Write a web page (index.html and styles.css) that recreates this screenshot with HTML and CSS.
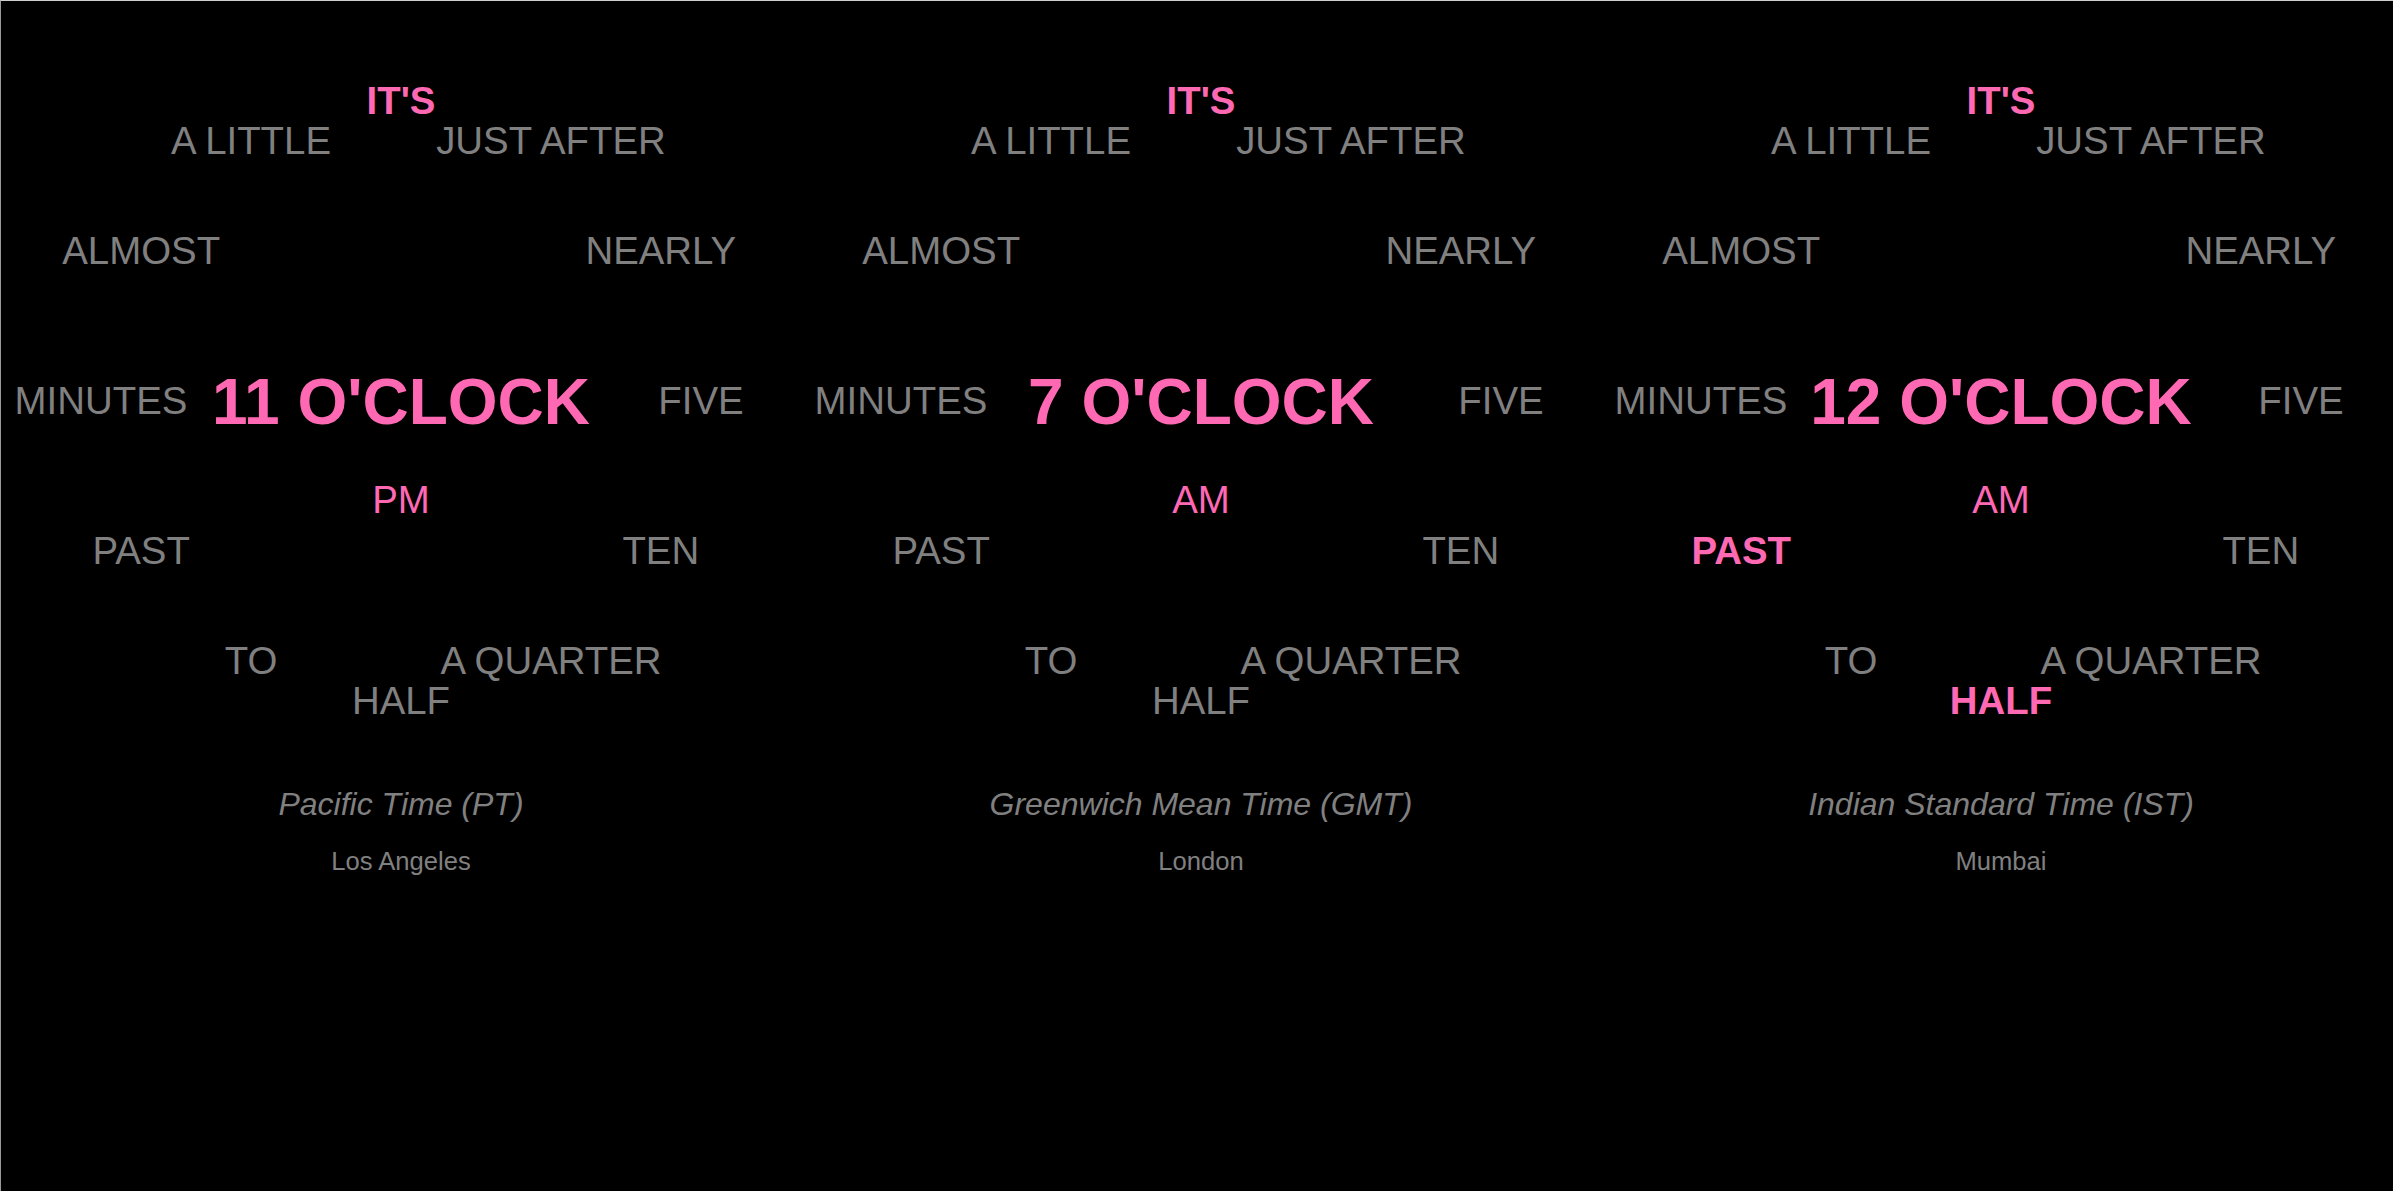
FILE: index.html
```html
<!DOCTYPE html>
<html lang="en">
<head>
<meta charset="utf-8">
<title>World Word Clocks</title>
<link rel="stylesheet" href="styles.css">
</head>
<body>
<main class="clocks">
  <section class="clock">
    <div class="face">
      <span class="word p0 on">IT'S</span>
      <span class="word p30">JUST AFTER</span>
      <span class="word p60">NEARLY</span>
      <span class="word p90">FIVE</span>
      <span class="word p120">TEN</span>
      <span class="word p150">A QUARTER</span>
      <span class="word p180">HALF</span>
      <span class="word p210">TO</span>
      <span class="word p240">PAST</span>
      <span class="word p270">MINUTES</span>
      <span class="word p300">ALMOST</span>
      <span class="word p330">A LITTLE</span>
      <span class="hour">11 O'CLOCK</span>
      <span class="meridiem">PM</span>
    </div>
    <p class="zone">Pacific Time (PT)</p>
    <p class="city">Los Angeles</p>
  </section>
  <section class="clock">
    <div class="face">
      <span class="word p0 on">IT'S</span>
      <span class="word p30">JUST AFTER</span>
      <span class="word p60">NEARLY</span>
      <span class="word p90">FIVE</span>
      <span class="word p120">TEN</span>
      <span class="word p150">A QUARTER</span>
      <span class="word p180">HALF</span>
      <span class="word p210">TO</span>
      <span class="word p240">PAST</span>
      <span class="word p270">MINUTES</span>
      <span class="word p300">ALMOST</span>
      <span class="word p330">A LITTLE</span>
      <span class="hour">7 O'CLOCK</span>
      <span class="meridiem">AM</span>
    </div>
    <p class="zone">Greenwich Mean Time (GMT)</p>
    <p class="city">London</p>
  </section>
  <section class="clock">
    <div class="face">
      <span class="word p0 on">IT'S</span>
      <span class="word p30">JUST AFTER</span>
      <span class="word p60">NEARLY</span>
      <span class="word p90">FIVE</span>
      <span class="word p120">TEN</span>
      <span class="word p150">A QUARTER</span>
      <span class="word p180 on">HALF</span>
      <span class="word p210">TO</span>
      <span class="word p240 on">PAST</span>
      <span class="word p270">MINUTES</span>
      <span class="word p300">ALMOST</span>
      <span class="word p330">A LITTLE</span>
      <span class="hour">12 O'CLOCK</span>
      <span class="meridiem">AM</span>
    </div>
    <p class="zone">Indian Standard Time (IST)</p>
    <p class="city">Mumbai</p>
  </section>
</main>
</body>
</html>
```
FILE: styles.css
```css
html {
  background: #000;
}

body {
  margin: 0;
  min-height: 1190px;
  background: #000;
  border-top: 1px solid #cfcfcf;
  border-left: 1px solid #9a9a9a;
  overflow: hidden;
  font-family: "Liberation Sans", Arial, sans-serif;
  color: #808080;
}

.clocks {
  display: flex;
  flex-wrap: nowrap;
}

.clock {
  flex: 0 0 800px;
  width: 800px;
  display: flex;
  flex-direction: column;
  align-items: center;
}

.face {
  position: relative;
  width: 800px;
  height: 785px;
}

.word,
.hour,
.meridiem {
  position: absolute;
  transform: translate(-50%, -50%);
  white-space: nowrap;
  line-height: normal;
}

.word {
  font-size: 38.4px;
  color: #808080;
}

.word.on {
  color: #ff69b4;
  font-weight: bold;
}

.hour {
  left: 400px;
  top: 401px;
  font-size: 64px;
  font-weight: bold;
  color: #ff69b4;
}

.meridiem {
  left: 400px;
  top: 499px;
  font-size: 38.4px;
  color: #ff69b4;
}

.p0   { left: 400px;   top: 100px; }
.p30  { left: 550px;   top: 140.2px; }
.p60  { left: 659.8px; top: 250px; }
.p90  { left: 700px;   top: 400px; }
.p120 { left: 659.8px; top: 550px; }
.p150 { left: 550px;   top: 659.8px; }
.p180 { left: 400px;   top: 700px; }
.p210 { left: 250px;   top: 659.8px; }
.p240 { left: 140.2px; top: 550px; }
.p270 { left: 100px;   top: 400px; }
.p300 { left: 140.2px; top: 250px; }
.p330 { left: 250px;   top: 140.2px; }

.zone {
  margin: 0;
  font-size: 32px;
  font-style: italic;
  color: #808080;
}

.city {
  margin: 24px 0 0;
  font-size: 25.6px;
  color: #808080;
}
```
